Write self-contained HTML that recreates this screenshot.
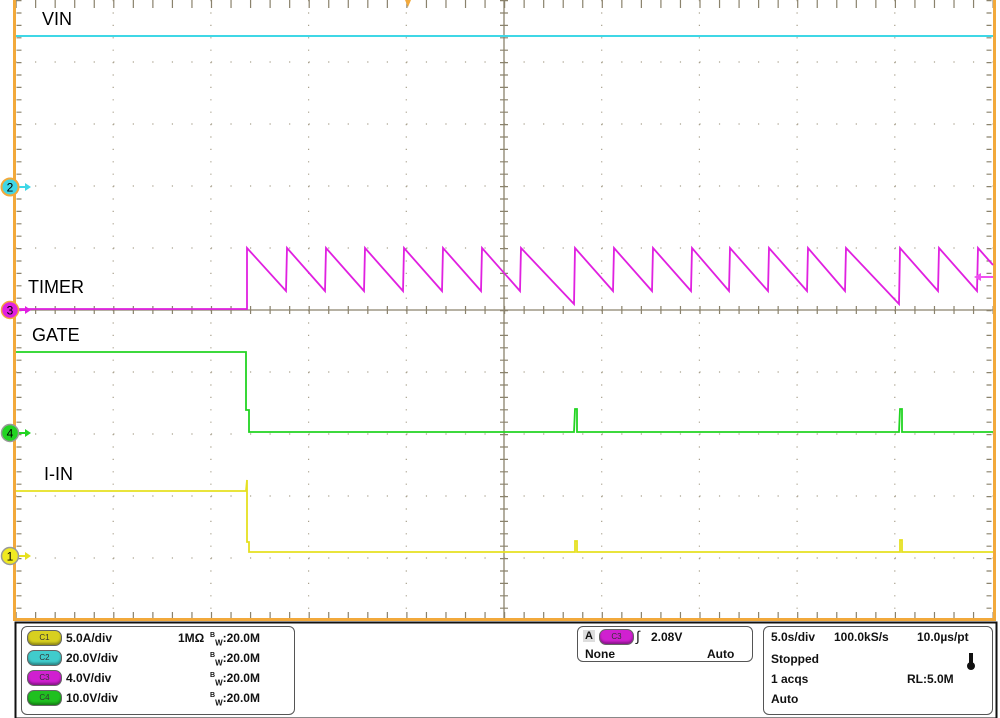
<!DOCTYPE html>
<html><head><meta charset="utf-8"><style>
html,body{margin:0;padding:0;background:#fff;}
body{width:1000px;height:718px;position:relative;overflow:hidden;font-family:"Liberation Sans",sans-serif;}
.t{position:absolute;font-size:12px;font-weight:bold;color:#111;white-space:nowrap;}
.box{position:absolute;border:1.5px solid #555;border-radius:6px;}
.pill{position:absolute;width:33px;height:14px;border-radius:7px;font-size:8px;text-align:center;line-height:14px;color:#333;box-shadow:inset 0 -2px 2px rgba(0,0,0,.35);border:1px solid #666;}
.lbl{position:absolute;font-size:18px;color:#000;}
</style></head><body>
<svg width="1000" height="718" style="position:absolute;left:0;top:0">
<g stroke="#a8a08c" stroke-width="1.2" stroke-dasharray="1.2 11.2">
<line x1="113.2" y1="0" x2="113.2" y2="620"/><line x1="210.9" y1="0" x2="210.9" y2="620"/>
<line x1="308.6" y1="0" x2="308.6" y2="620"/><line x1="406.3" y1="0" x2="406.3" y2="620"/>
<line x1="601.7" y1="0" x2="601.7" y2="620"/><line x1="699.4" y1="0" x2="699.4" y2="620"/>
<line x1="797.1" y1="0" x2="797.1" y2="620"/><line x1="894.8" y1="0" x2="894.8" y2="620"/>
</g>
<g stroke="#a8a08c" stroke-width="1.2" stroke-dasharray="1.2 18.34">
<line x1="15.5" y1="62" x2="993" y2="62"/><line x1="15.5" y1="124" x2="993" y2="124"/>
<line x1="15.5" y1="186" x2="993" y2="186"/><line x1="15.5" y1="248" x2="993" y2="248"/>
<line x1="15.5" y1="372" x2="993" y2="372"/><line x1="15.5" y1="434" x2="993" y2="434"/>
<line x1="15.5" y1="496" x2="993" y2="496"/><line x1="15.5" y1="558" x2="993" y2="558"/>
</g>
<line x1="15" y1="310" x2="993" y2="310" stroke="#8a826c" stroke-width="1.3"/>
<line x1="504" y1="0" x2="504" y2="620" stroke="#8a826c" stroke-width="1.3"/>
<line x1="15.5" y1="310" x2="993" y2="310" stroke="#8a826c" stroke-width="8" stroke-dasharray="1.2 18.34"/>
<line x1="504" y1="0" x2="504" y2="620" stroke="#8a826c" stroke-width="8" stroke-dasharray="1.2 11.2"/>
<line x1="15.5" y1="4" x2="993" y2="4" stroke="#8a826c" stroke-width="8" stroke-dasharray="1.2 18.34"/>
<line x1="15.5" y1="616" x2="993" y2="616" stroke="#8a826c" stroke-width="8" stroke-dasharray="1.2 18.34"/>
<line x1="19" y1="0" x2="19" y2="620" stroke="#8a826c" stroke-width="5" stroke-dasharray="1.2 11.2"/>
<line x1="989" y1="0" x2="989" y2="620" stroke="#8a826c" stroke-width="5" stroke-dasharray="1.2 11.2"/>
<rect x="14.5" y="-2" width="980" height="621.5" fill="none" stroke="#f2a93b" stroke-width="3"/>
<path d="M405,0 L411,0 L408,7 Z" fill="#f2a93b"/>
<path d="M16,36 L993,36" stroke="#3fd7e6" stroke-width="2" fill="none"/>
<path d="M16,309 L247,309 L247,248 L286,291 L287,248 L325,291 L326,248 L364,291 L365,248 L403,291 L404,248 L442,291 L443,248 L481,291 L482,248 L520,291 L521,248 L574,304 L575,248 L613,291 L614,248 L652,291 L653,248 L691,291 L692,248 L729,291 L730,248 L768,291 L769,248 L807,291 L808,248 L845,291 L846,248 L899,304 L900,248 L938,291 L939,248 L977,291 L978,248 L993,265" stroke="#e020e0" stroke-width="1.8" fill="none"/>
<path d="M16,352 L246,352 L246,410 L249,410 L249,432 L574,432 L575,409 L577,409 L577,432 L899,432 L900,409 L902,409 L902,432 L993,432" stroke="#22d422" stroke-width="1.8" fill="none"/>
<path d="M16,491 L246,491 L247,480 L247,542 L249,542 L249,552 L575,552 L575,541 L577,541 L577,552 L900,552 L900,540 L902,540 L902,552 L993,552" stroke="#e6e020" stroke-width="1.8" fill="none"/>
<path d="M980,277 L993,277" stroke="#f050f0" stroke-width="2"/>
<path d="M974,277 L981,273 L981,281 Z" fill="#f050f0"/>
<g font-family="Liberation Sans" font-size="12" text-anchor="middle">
<line x1="16" y1="187" x2="27" y2="187" stroke="#3fd7e6" stroke-width="2"/><path d="M25,183 L31,187 L25,191Z" fill="#3fd7e6"/>
<circle cx="10" cy="187" r="8.5" fill="#3fd7e6" stroke="#f2a93b" stroke-width="2"/><text x="10" y="191.5">2</text>
<line x1="16" y1="310" x2="27" y2="310" stroke="#e020e0" stroke-width="2"/><path d="M25,306 L31,310 L25,314Z" fill="#e020e0"/>
<circle cx="10" cy="310" r="8.5" fill="#e020e0" stroke="#f2a93b" stroke-width="1.5"/><text x="10" y="314.5">3</text>
<line x1="16" y1="433" x2="27" y2="433" stroke="#22d422" stroke-width="2"/><path d="M25,429 L31,433 L25,437Z" fill="#22d422"/>
<circle cx="10" cy="433" r="8.5" fill="#22d422" stroke="#999" stroke-width="1.5"/><text x="10" y="437.5">4</text>
<line x1="16" y1="556" x2="27" y2="556" stroke="#e6e020" stroke-width="2"/><path d="M25,552 L31,556 L25,560Z" fill="#e6e020"/>
<circle cx="10" cy="556" r="8.5" fill="#f0ea20" stroke="#999" stroke-width="1.5"/><text x="10" y="560.5">1</text>
</g>
<rect x="15.5" y="622.5" width="981" height="96" fill="none" stroke="#111" stroke-width="2"/>
</svg>
<div class="lbl" style="left:42px;top:9px">VIN</div>
<div class="lbl" style="left:28px;top:277px">TIMER</div>
<div class="lbl" style="left:32px;top:325px">GATE</div>
<div class="lbl" style="left:44px;top:464px">I-IN</div>

<div class="box" style="left:21px;top:626px;width:272px;height:87px"></div>
<div class="pill" style="left:27px;top:630px;background:#d8d020">C1</div>
<div class="pill" style="left:27px;top:650px;background:#40cccc">C2</div>
<div class="pill" style="left:27px;top:670px;background:#d020d0">C3</div>
<div class="pill" style="left:27px;top:690px;background:#20c020">C4</div>
<div class="t" style="left:66px;top:631px">5.0A/div</div>
<div class="t" style="left:66px;top:651px">20.0V/div</div>
<div class="t" style="left:66px;top:671px">4.0V/div</div>
<div class="t" style="left:66px;top:691px">10.0V/div</div>
<div class="t" style="left:178px;top:631px">1MΩ</div>
<div class="t" style="left:210px;top:631px"><sup style="font-size:7px">B</sup><sub style="font-size:8px">W</sub>:20.0M</div>
<div class="t" style="left:210px;top:651px"><sup style="font-size:7px">B</sup><sub style="font-size:8px">W</sub>:20.0M</div>
<div class="t" style="left:210px;top:671px"><sup style="font-size:7px">B</sup><sub style="font-size:8px">W</sub>:20.0M</div>
<div class="t" style="left:210px;top:691px"><sup style="font-size:7px">B</sup><sub style="font-size:8px">W</sub>:20.0M</div>

<div class="box" style="left:577px;top:626px;width:174px;height:34px"></div>
<div class="t" style="left:583px;top:630px;background:#ddd;padding:0 2px;font-size:11px">A</div>
<div class="pill" style="left:599px;top:629px;background:#d020d0">C3</div>
<div class="t" style="left:636px;top:628px;font-size:14px;font-weight:normal">∫</div>
<div class="t" style="left:651px;top:630px">2.08V</div>
<div class="t" style="left:585px;top:647px">None</div>
<div class="t" style="left:707px;top:647px">Auto</div>

<div class="box" style="left:763px;top:626px;width:228px;height:87px"></div>
<div class="t" style="left:771px;top:630px">5.0s/div</div>
<div class="t" style="left:834px;top:630px">100.0kS/s</div>
<div class="t" style="left:917px;top:630px">10.0µs/pt</div>
<div class="t" style="left:771px;top:652px">Stopped</div>
<div style="position:absolute;left:969px;top:653px;width:4px;height:11px;background:#111"></div>
<div style="position:absolute;left:967px;top:662px;width:8px;height:8px;border-radius:4px;background:#111"></div>
<div class="t" style="left:771px;top:672px">1 acqs</div>
<div class="t" style="left:907px;top:672px">RL:5.0M</div>
<div class="t" style="left:771px;top:692px">Auto</div>
</body></html>
